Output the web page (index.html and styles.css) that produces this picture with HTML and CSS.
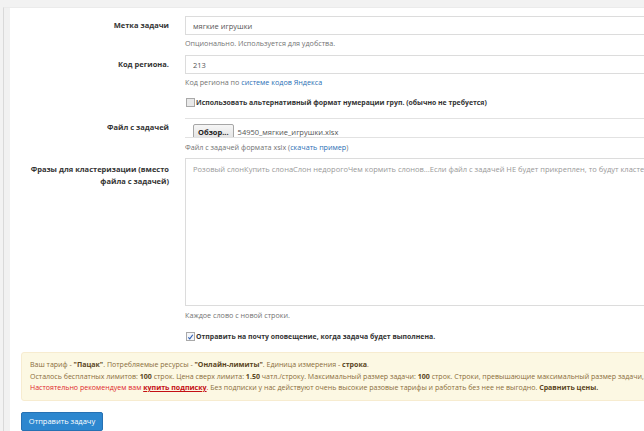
FILE: index.html
```html
<!DOCTYPE html>
<html lang="ru">
<head>
	<meta charset="UTF-8">
	<title>Новая задача</title>
	<link rel="stylesheet" href="styles.css">
</head>
<body>
	<div class="panel">
		<form class="task-form">
			<div class="form-row">
				<label class="form-row__label">Метка задачи</label>
				<div class="form-row__field">
					<input class="input" type="text" value="мягкие игрушки">
					<p class="help">Опционально. Используется для удобства.</p>
				</div>
			</div>

			<div class="form-row">
				<label class="form-row__label">Код региона.</label>
				<div class="form-row__field">
					<input class="input" type="text" value="213">
					<p class="help">Код региона по <a href="#">системе кодов Яндекса</a></p>
				</div>
			</div>

			<div class="form-row">
				<div></div>
				<div class="form-row__field">
					<label class="check"><span class="check__box"></span>Использовать альтернативный формат нумерации груп. (обычно не требуется)</label>
				</div>
			</div>

			<div class="form-row form-row--file">
				<label class="form-row__label">Файл с задачей</label>
				<div class="form-row__field">
					<div class="file">
						<span class="file__btn">Обзор...</span>
						<span class="file__name">54950_мягкие_игрушки.xlsx</span>
					</div>
					<p class="help">Файл с задачей формата xslx (<a href="#">скачать пример</a>)</p>
				</div>
			</div>

			<div class="form-row form-row--area">
				<label class="form-row__label form-row__label--wrap">Фразы для кластеризации (вместо файла с задачей)</label>
				<div class="form-row__field">
					<textarea class="textarea" placeholder="Розовый слонКупить слонаСлон недорогоЧем кормить слонов...Если файл с задачей НЕ будет прикреплен, то будут кластеризованы эти фразы"></textarea>
					<p class="help">Каждое слово с новой строки.</p>
				</div>
			</div>

			<div class="form-row form-row--notify">
				<div></div>
				<div class="form-row__field">
					<label class="check"><span class="check__box check__box--on"><svg viewBox="0 0 8 8" width="8" height="8"><path d="M1.5 4.3 L3.2 6.2 L6.6 1.4" fill="none" stroke="#2f5fb3" stroke-width="1.3"/></svg></span>Отправить на почту оповещение, когда задача будет выполнена.</label>
				</div>
			</div>

			<div class="alert">
				<p>Ваш тариф - <b>"Пацак"</b>. Потребляемые ресурсы - <b>"Онлайн-лимиты"</b>. Единица измерения - <b>строка</b>.</p>
				<p>Осталось бесплатных лимитов: <b>100</b> строк. Цена сверх лимита: <b>1.50</b> чатл./строку. Максимальный размер задачи: <b>100</b> строк. Строки, превышающие максимальный размер задачи, будут отброшены.</p>
				<p><span class="alert__red">Настоятельно рекомендуем вам <a href="#">купить подписку</a>.</span> Без подписки у нас действуют очень высокие разовые тарифы и работать без нее не выгодно. <b>Сравнить цены.</b></p>
			</div>

			<button class="btn" type="button">Отправить задачу</button>
		</form>
	</div>
</body>
</html>
```

FILE: styles.css
```css
*, *::after, *::before {
	box-sizing: border-box;
}

body {
	margin: 0;
	overflow: hidden;
	background-color: #f2f2f2;
	font-family: "Open Sans", sans-serif;
	font-size: 7.5px;
	color: #333;
}

p {
	margin: 0;
}

a {
	color: #2a6fb5;
	text-decoration: none;
}

.panel {
	width: 1000px;
	margin: 7px 0 0 3px;
	border-left: 1px solid #d9d9d9;
	border-top: 1px solid #ebebeb;
	background-color: #fff;
	box-shadow: inset 6px 0 0 #f1f1f1;
}

.task-form {
	padding: 8px 0 20px 0;
}

.form-row {
	display: grid;
	grid-template-columns: 181px 800px;
}

.form-row__label {
	padding-right: 16px;
	line-height: 19px;
	font-weight: bold;
	text-align: right;
}

.form-row__label--wrap {
	padding-left: 22px;
	padding-top: 5px;
	line-height: 12px;
}

.input {
	display: block;
	width: 100%;
	height: 19px;
	padding: 0 7px;
	border: 1px solid #dcdcdc;
	font-family: inherit;
	font-size: 7.5px;
	color: #555;
}

.help {
	margin: 2px 0 6px;
	line-height: 12px;
	font-size: 7.2px;
	color: #737373;
}

.check {
	display: flex;
	align-items: center;
	height: 12px;
	margin: 2px 0 10px;
	font-size: 6.9px;
	font-weight: bold;
}

.check__box {
	display: inline-flex;
	width: 9px;
	height: 9px;
	margin: 0 1px 0 1px;
	border: 1px solid #a9a9a9;
	background-color: #e9e9e9;
}

.check__box--on {
	background-color: #f4f6fa;
}

.check__box svg {
	display: block;
}

.file {
	display: flex;
	align-items: flex-start;
	height: 20px;
	overflow: hidden;
	padding: 5px 0 0 8px;
	border-top: 1px solid #e2e2e2;
	border-bottom: 1px solid #e2e2e2;
	color: #555;
}

.file__btn {
	padding: 2px 4px;
	border: 1px solid #a6a6a6;
	border-radius: 2px;
	background: linear-gradient(#f6f6f6, #e2e2e2);
	font-weight: bold;
	color: #222;
}

.file__name {
	margin-left: 4px;
	line-height: 16px;
}

.form-row--file .help {
	margin: 3px 0 5px;
}

.textarea {
	display: block;
	width: 100%;
	height: 148px;
	padding: 5px 7px;
	border: 1px solid #dcdcdc;
	font-family: inherit;
	font-size: 7.5px;
	resize: none;
}

.textarea::placeholder {
	color: #999;
}

.form-row--area .help {
	margin: 3px 0 7px;
}

.form-row--notify .check {
	margin-bottom: 10px;
}

.alert {
	width: 900px;
	margin-left: 17px;
	padding: 6px 8px;
	border: 1px solid #f7ecd0;
	border-radius: 3px;
	background-color: #fcf8e3;
	line-height: 11.5px;
	font-size: 7.05px;
	color: #8a6d3b;
	white-space: nowrap;
}

.alert b {
	color: #5a4522;
}

.alert__red {
	color: #e0262a;
}

.alert__red a {
	font-weight: bold;
	color: #c40f14;
	text-decoration: underline;
}

.btn {
	display: block;
	width: 82px;
	height: 19px;
	margin: 11px 0 0 17px;
	padding: 0;
	border: 1px solid #2671b3;
	border-radius: 2px;
	background-color: #2d87cf;
	font-family: inherit;
	font-size: 7.5px;
	color: #fff;
}
```
